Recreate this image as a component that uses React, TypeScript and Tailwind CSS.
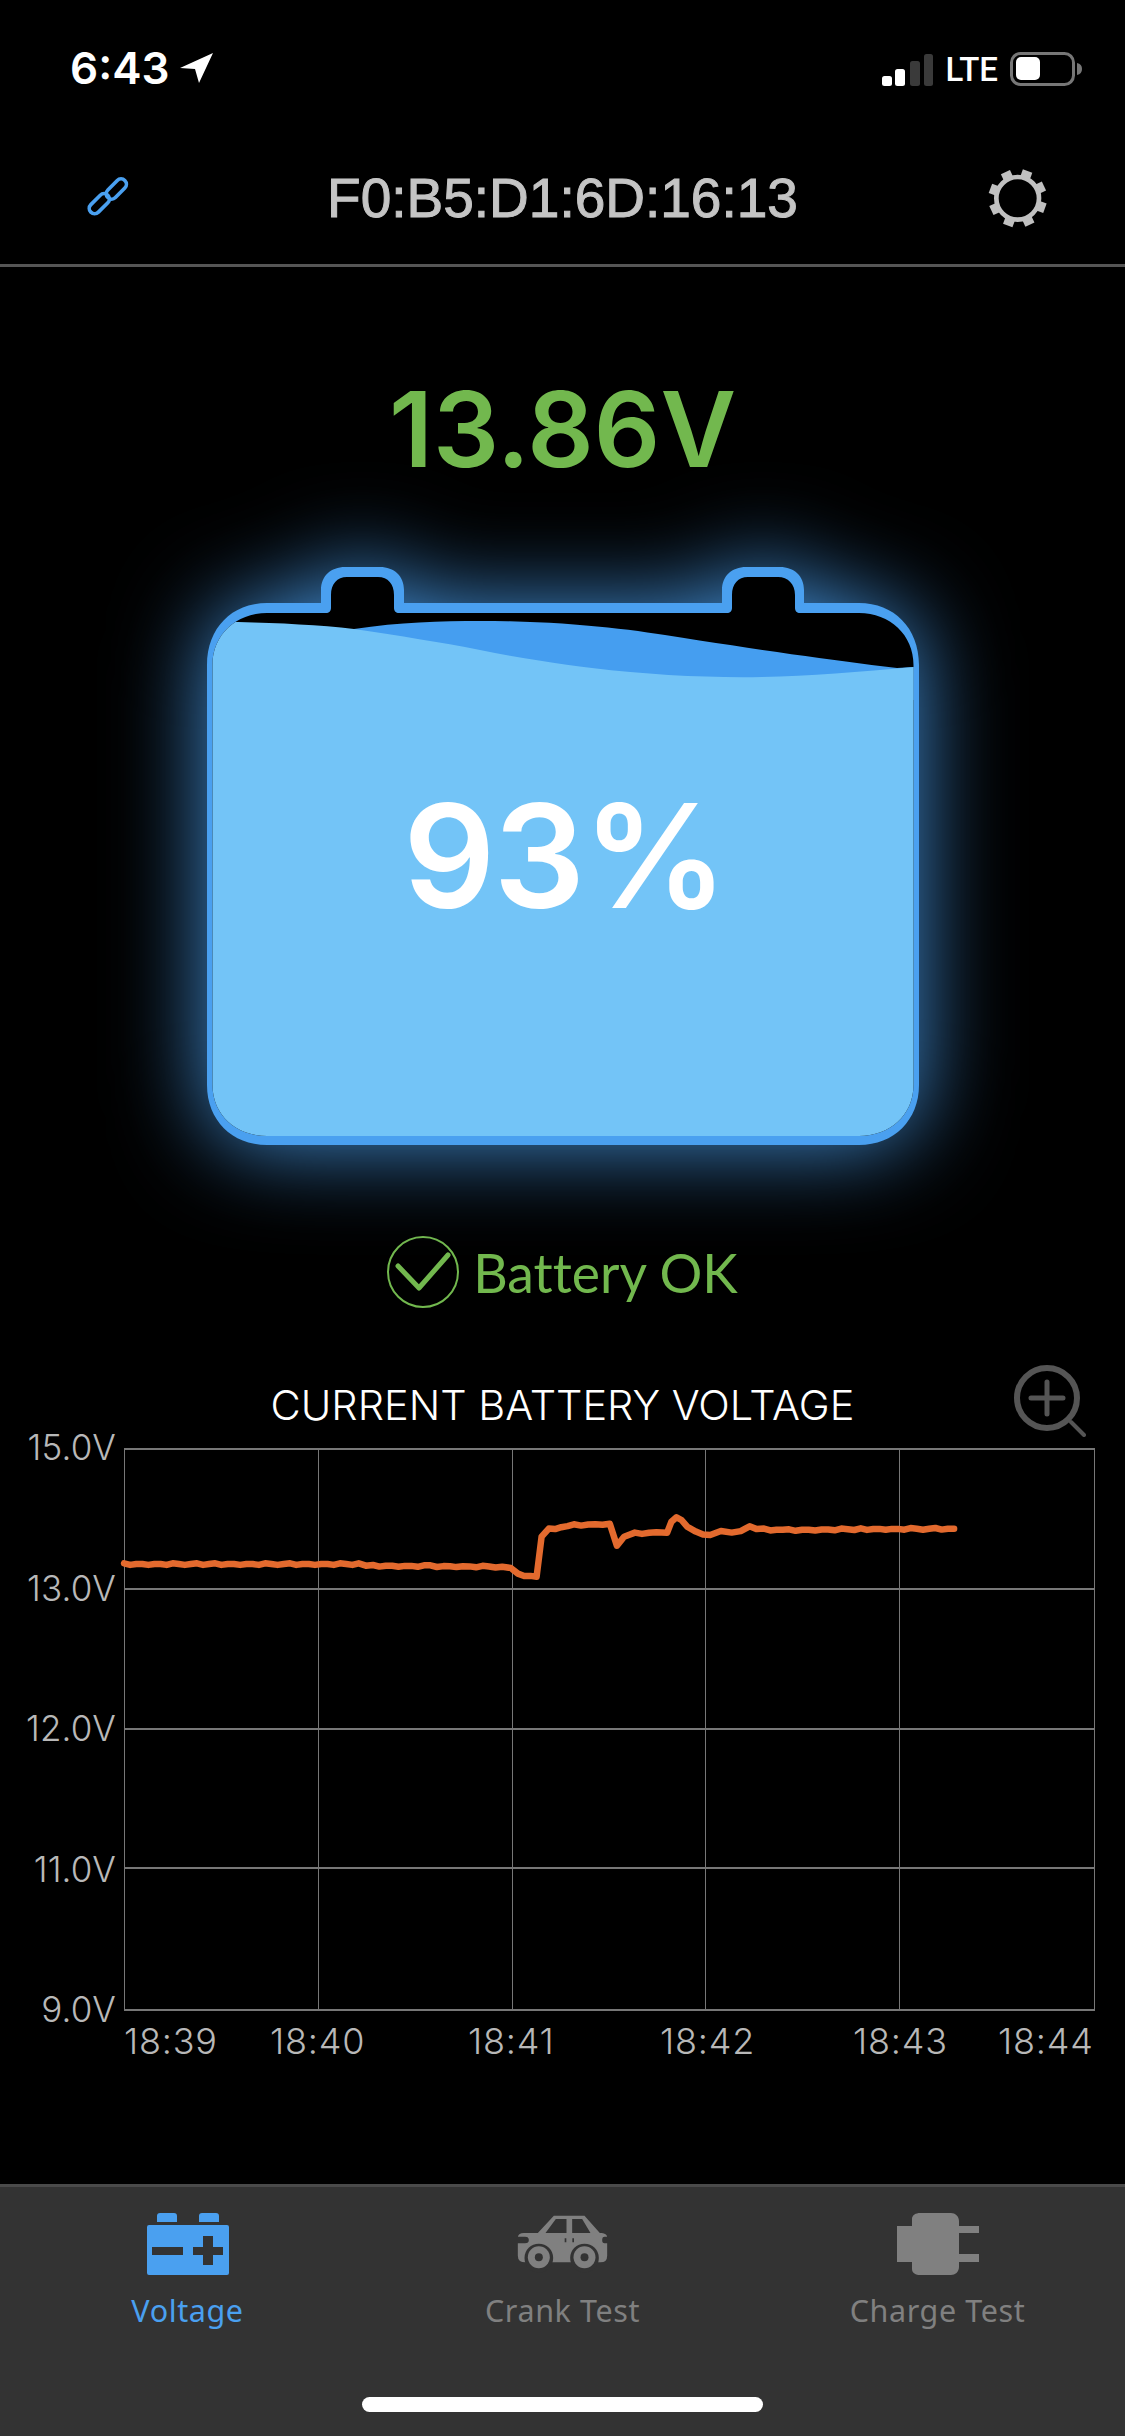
const linePoints = [
  [173, 672], [300, 672], [500, 672], [520, 677], [600, 678], [700, 680], [712, 684], [722, 703], [748, 710],
  [755, 590], [765, 568], [800, 555], [850, 551], [860, 617], [870, 590], [885, 580], [915, 577], [930, 578],
  [936, 545], [943, 532], [950, 540], [958, 560], [970, 577], [990, 585], [1005, 573], [1020, 580], [1045, 561], [1065, 568],
  [1100, 570], [1200, 567], [1330, 566],
].map(([x, y]) => [x / 1.394 - 124, y / 3 + 1340 - 1448]);

// long flat stretches get split up so the trace keeps its slight jitter
const plotPoints = linePoints
  .flatMap(([x, y], i) => {
    const next = linePoints[i + 1];
    if (!next || next[0] - x < 12) return [[x, y]];
    const steps = Math.floor((next[0] - x) / 6);
    return Array.from({ length: steps }, (_, s) => [
      x + ((next[0] - x) * s) / steps,
      y + ((next[1] - y) * s) / steps + (s % 3 === 1 ? 0.9 : s % 4 === 0 ? -0.7 : 0),
    ]);
  })
  .map(([x, y]) => `${x.toFixed(1)},${y.toFixed(1)}`)
  .join(" ");

const batteryOuter =
  "M207 665 C207 628 232 603 267 603 H321 V590 C321 576 331 567 345 567 H380 C394 567 404 576 404 590 V603 H722 V590 C722 576 732 567 746 567 H780 C794 567 804 576 804 590 V603 H859 C894 603 919 628 919 665 V1085 C919 1120 894 1145 859 1145 H267 C232 1145 207 1120 207 1085 Z";
const batteryInner =
  "M212.5 665 C212.5 635 236 613 267 613 H326 C329 613 331 611 331 608 V595 C331 584 337 577 347 577 H378 C388 577 394 584 394 595 V608 C394 611 396 613 399 613 H727 C730 613 732 611 732 608 V595 C732 584 738 577 748 577 H778 C788 577 795 584 795 595 V608 C795 611 797 613 800 613 H859 C890 613 913.5 635 913.5 665 V1085 C913.5 1115 890 1136 859 1136 H267 C236 1136 212.5 1115 212.5 1085 Z";

const Battery = () => (
  <div className="relative h-[578px] w-[712px]">
    <svg
      viewBox="207 567 712 578"
      className="block h-[578px] w-[712px] overflow-visible [filter:drop-shadow(0_0_46px_rgba(74,160,240,0.9))]"
    >
      <defs>
        <clipPath id="battery-inner">
          <path d={batteryInner} />
        </clipPath>
      </defs>
      <path d={batteryOuter} fill="#4aa0f0" />
      <path d={batteryInner} fill="#000" />
      <g clipPath="url(#battery-inner)">
        <path d="M354 629 C400 622 440 621 481 621 C560 621 620 628 665 635 C760 650 830 660 897 668 L915 667 V700 H354 Z" fill="#459ef0" />
        <path d="M205 621 L238 622 C280 623 320 625 354 629 C400 636 440 642 480 650 C520 658 560 664 592 668 C650 675 710 678 762 677 C810 676 860 672 915 667 V1140 H205 Z" fill="#73c4f7" />
      </g>
    </svg>
    <div className="absolute inset-0 flex items-center justify-center pl-[4px] font-['Inter',sans-serif] text-[144px] font-semibold leading-none tracking-[-2px] text-white">
      93%
    </div>
  </div>
);

const Chart = () => (
  <div className="mt-[19px] flex">
    <div className="flex h-[563px] w-[116px] flex-col justify-between pt-[1px] text-right font-['Inter',sans-serif] text-[35px] font-light leading-none tracking-[0.2px] text-[#b8b8b8]">
      {["15.0V", "13.0V", "12.0V", "11.0V", "9.0V"].map((label) => (
        <span key={label} className="h-0 -translate-y-[19px]">
          {label}
        </span>
      ))}
    </div>
    <div className="ml-[8px] w-[971px]">
      <div className="relative h-[563px]">
        <div className="grid h-full grid-cols-5 grid-rows-4 border-2 border-[#777] border-l-[1.5px] border-r-[1.5px]">
          {Array.from({ length: 20 }).map((_, i) => (
            <div
              key={i}
              className={`${i % 5 < 4 ? "border-r-[1.5px]" : ""} ${i < 15 ? "border-b-2" : ""} border-[#777]`}
            />
          ))}
        </div>
        <svg className="absolute left-0 top-0 h-full w-full overflow-visible" fill="none">
          <polyline points={plotPoints} stroke="#e36a2e" strokeWidth="6.5" strokeLinejoin="round" strokeLinecap="round" />
        </svg>
      </div>
      <div className="mt-[10px] flex font-['Inter',sans-serif] text-[36px] font-light leading-[40px] tracking-[0.8px] text-[#b8b8b8]">
        <span className="w-[146px]">18:39</span>
        <span className="w-[198px]">18:40</span>
        <span className="w-[192px]">18:41</span>
        <span className="w-[193px]">18:42</span>
        <span className="w-[145px]">18:43</span>
        <span>18:44</span>
      </div>
    </div>
  </div>
);

const CarIcon = () => (
  <svg viewBox="50 32 272 186" className="h-[62px] w-[91px]">
    <path
      fillRule="evenodd"
      d="M52 104 Q54 92 70 92 H112 L160 40 H252 L298 92 H304 Q318 94 320 103 H312 Q305 103 305 113 Q305 123 312 123 H320 V160 Q320 180 300 180 H75 Q52 180 52 160 V123 H74 Q85 123 85 113 Q85 103 74 103 H52 Z M135 92 H198 V50 H166 Z M215 50 V92 H270 L245 50 Z"
      fill="#808080"
    />
    <circle cx="115" cy="167" r="43" fill="#333" />
    <circle cx="252" cy="167" r="43" fill="#333" />
    <circle cx="115" cy="165" r="33" fill="#808080" />
    <circle cx="115" cy="165" r="12" fill="#333" />
    <circle cx="252" cy="165" r="33" fill="#808080" />
    <circle cx="252" cy="165" r="12" fill="#333" />
    <path d="M195 108 V120 M218 108 V120" stroke="#333" strokeWidth="5" />
  </svg>
);

const TabBar = () => (
  <nav className="flex h-[252px] flex-col border-t-[3px] border-[#4a4a4a] bg-[#333]">
    <div className="grid grid-cols-3 pt-[26px] font-['Noto_Sans',sans-serif] text-[30.5px] leading-[40px] tracking-[0.6px] text-[#808080]">
      <div className="flex flex-col items-center">
        <svg viewBox="0 0 82 62" className="h-[62px] w-[82px]">
          <path d="M10 9 V3 Q10 0 13 0 H27 Q30 0 30 3 V9 Z M52 9 V3 Q52 0 55 0 H69 Q72 0 72 3 V9 Z" fill="#4aa0f0" />
          <path
            fillRule="evenodd"
            d="M2 12 H80 Q82 12 82 14 V60 Q82 62 80 62 H2 Q0 62 0 60 V14 Q0 12 2 12 Z M5 34 V42 H36 V34 Z M46 34 V42 H56 V52 H66 V42 H76 V34 H66 V23 H56 V34 Z"
            fill="#4aa0f0"
          />
        </svg>
        <span className="mt-[15px] text-[#4aa0f0]">Voltage</span>
      </div>
      <div className="flex flex-col items-center">
        <CarIcon />
        <span className="mt-[15px]">Crank Test</span>
      </div>
      <div className="flex flex-col items-center">
        <svg viewBox="0 0 82 62" className="h-[62px] w-[82px]">
          <path
            d="M15 13 V6 C15 2 19 0 23 0 H54 C58 0 62 3 62 8 V13 H82 V20 H62 V41 H82 V49 H62 V54 C62 59 58 62 54 62 H23 C19 62 15 60 15 56 V49 H0 V13 Z"
            fill="#808080"
          />
        </svg>
        <span className="mt-[15px]">Charge Test</span>
      </div>
    </div>
    <div className="mx-auto mt-[67px] h-[15px] w-[401px] rounded-full bg-white" />
  </nav>
);

export default function App() {
  return (
    <div className="flex h-[2436px] w-[1125px] flex-col overflow-hidden bg-black">
      <header className="flex h-[267px] flex-col border-b-[3px] border-[#555]">
        <div className="flex items-start justify-between pl-[70px] pr-[43px] pt-[44px]">
          <div className="flex items-center gap-[11px] font-['Inter',sans-serif] text-[44px] font-semibold leading-[48px] text-white">
            6:43
            <svg viewBox="0 0 33 30" className="h-[30px] w-[33px]">
              <path d="M33 0 L0 15 L15 16 L19 30 Z" fill="#fff" />
            </svg>
          </div>
          <div className="flex items-center">
            <svg viewBox="0 0 51 32" className="mt-[9px] h-[32px] w-[51px]">
              <rect x="0" y="22" width="10" height="10" rx="2.5" fill="#fff" />
              <rect x="13" y="15" width="10" height="17" rx="2.5" fill="#fff" />
              <rect x="28" y="7" width="10" height="25" rx="2.5" fill="#3a3a3a" />
              <rect x="42" y="0" width="9" height="32" rx="2.5" fill="#3a3a3a" />
            </svg>
            <span className="ml-[12px] mt-[9px] font-['Roboto',sans-serif] text-[33px] font-medium leading-[32px] text-white">LTE</span>
            <svg viewBox="0 0 72 34" className="ml-[12px] mt-[8px] h-[34px] w-[72px]">
              <rect x="1.5" y="1.5" width="62" height="31" rx="9" fill="none" stroke="#777" strokeWidth="3" />
              <rect x="6" y="5" width="24" height="23" rx="5" fill="#fff" />
              <path d="M67 11 Q72 12 72 17 Q72 22 67 23 Z" fill="#777" />
            </svg>
          </div>
        </div>
        <div className="flex flex-1 items-center justify-between pl-[70px] pr-[65px] pt-[40px]">
          <svg viewBox="0 0 240 240" className="h-[80px] w-[80px]" fill="none" stroke="#4aa0f0" strokeWidth="11">
            <rect x="-36" y="-16" width="72" height="32" rx="16" transform="translate(139 93) rotate(-45)" />
            <rect x="-36" y="-16" width="72" height="32" rx="16" transform="translate(88 137) rotate(-45)" />
          </svg>
          <h1 className="font-['Liberation_Sans',sans-serif] text-[55px] leading-none text-[#c4c4c4] [-webkit-text-stroke:1px_#c4c4c4]">
            F0:B5:D1:6D:16:13
          </h1>
          <svg viewBox="0 0 255 255" className="h-[85px] w-[85px]" fill="none">
            <circle cx="128" cy="127" r="64" stroke="#c0c0c0" strokeWidth="14" />
            {[0, 45, 90, 135, 180, 225, 270, 315].map((a) => (
              <rect key={a} x="113" y="40" width="30" height="26" fill="#c0c0c0" transform={`rotate(${a + 20} 128 127)`} />
            ))}
          </svg>
        </div>
      </header>

      <main className="flex flex-1 flex-col items-center">
        <div className="mt-[106px] font-['Inter',sans-serif] text-[104px] font-semibold leading-[112px] text-[#72b84e]">
          13.86V
        </div>
        <div className="mt-[82px]">
          <Battery />
        </div>
        <div className="mt-[91px] flex items-center gap-[14px] font-['Lato',sans-serif] text-[53.5px] leading-[72px] text-[#72b84e] [font-variant-ligatures:none]">
          <svg viewBox="0 0 72 72" className="h-[72px] w-[72px]" fill="none" stroke="#72b84e">
            <circle cx="36" cy="36" r="35" strokeWidth="2" />
            <path d="M11 30 L32 52 L61 19" strokeWidth="5" strokeLinecap="round" strokeLinejoin="round" />
          </svg>
          Battery OK
        </div>
        <section className="mt-[73px] w-full">
          <div className="relative text-center font-['Inter',sans-serif] text-[41.5px] font-light leading-[48px] text-white">
            CURRENT BATTERY VOLTAGE
            <svg viewBox="0 0 72 72" className="absolute right-[39px] top-[-16px] h-[72px] w-[72px]" fill="none" stroke="#555">
              <circle cx="33" cy="33" r="30" strokeWidth="6" />
              <path d="M33 17 V49 M17 33 H49" strokeWidth="5" strokeLinecap="round" />
              <path d="M57 57 L70 70" strokeWidth="4" strokeLinecap="round" />
            </svg>
          </div>
          <Chart />
        </section>
      </main>

      <TabBar />
    </div>
  );
}
